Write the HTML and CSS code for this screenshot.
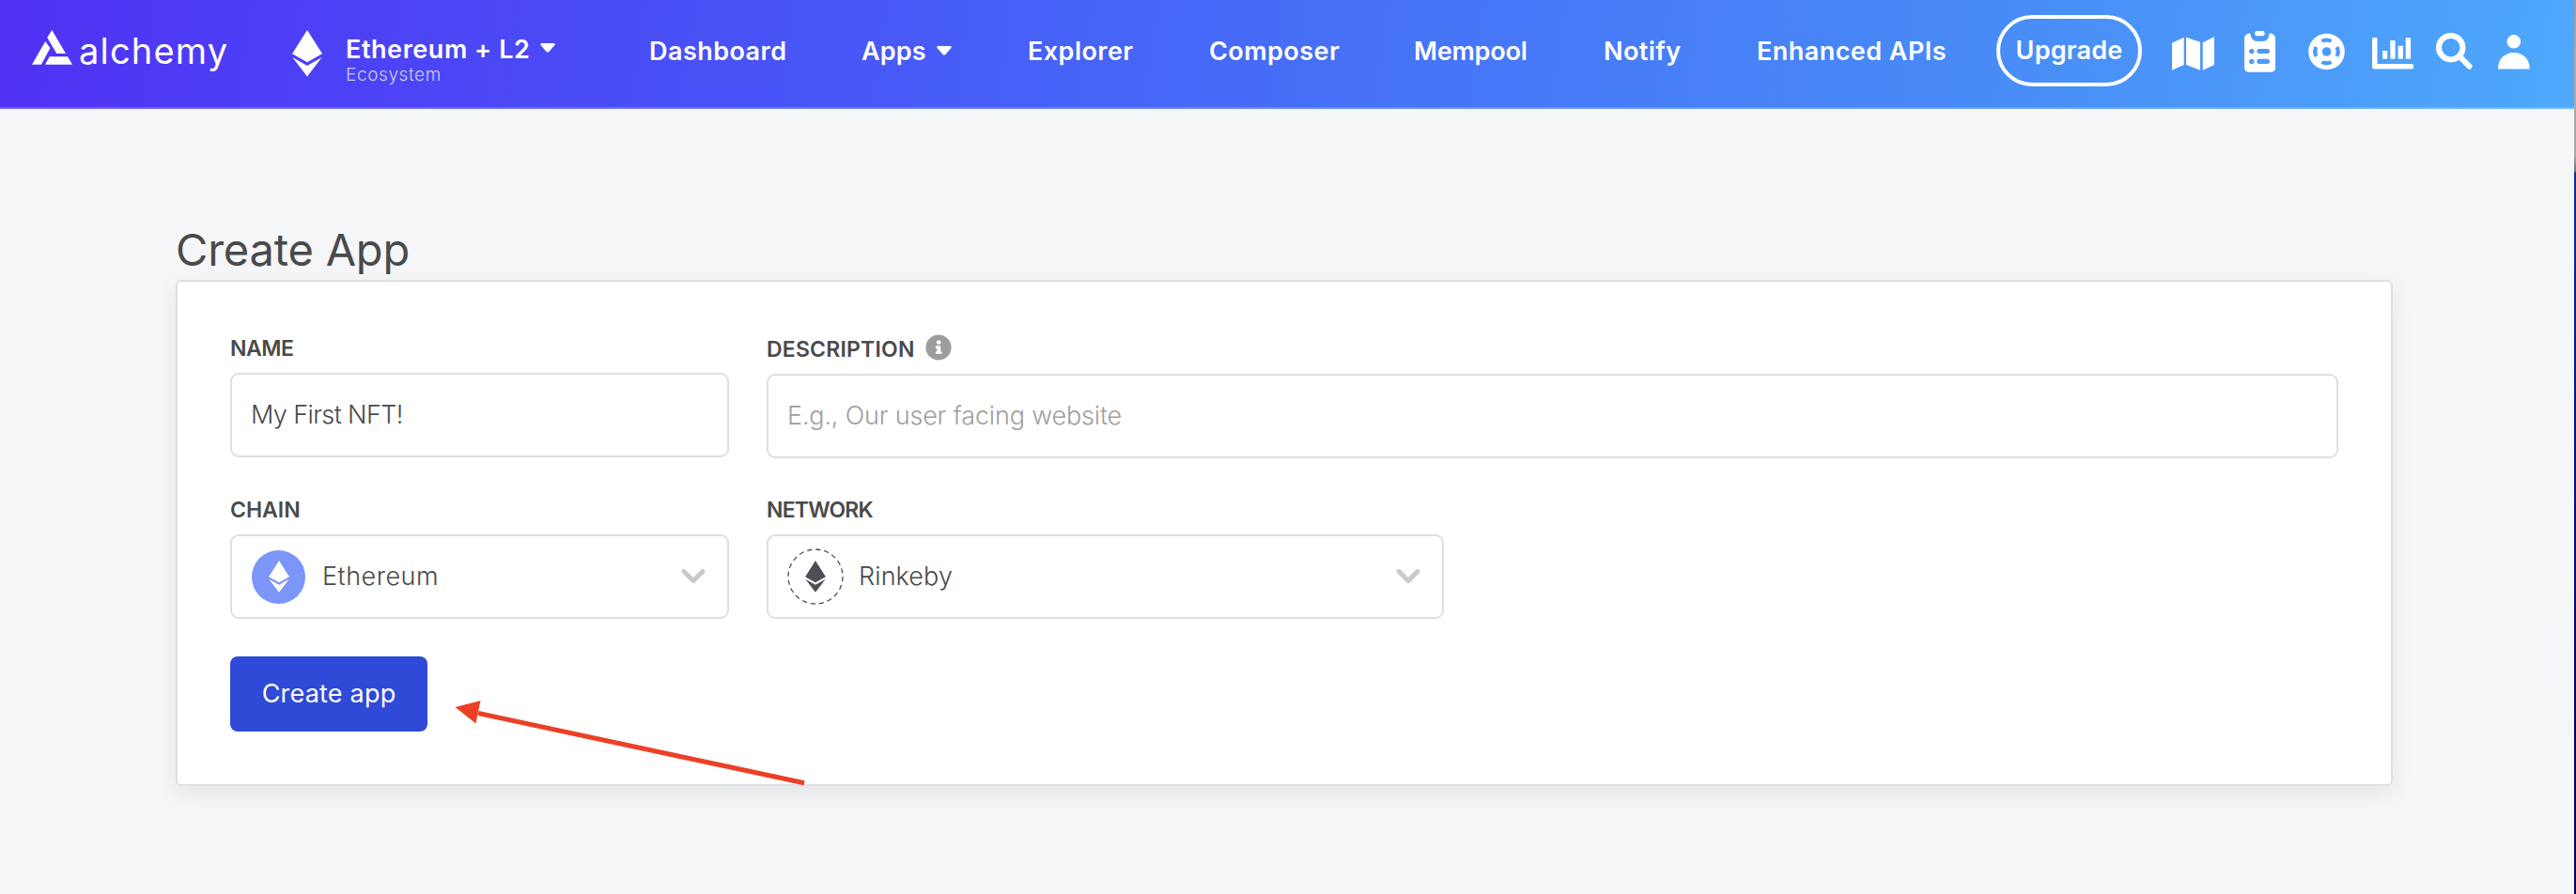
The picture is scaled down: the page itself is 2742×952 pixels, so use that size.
FILE: index.html
```html
<!DOCTYPE html>
<html lang="en">
<head>
<meta charset="utf-8">
<title>Create App</title>
<link rel="stylesheet" href="styles.css">
</head>
<body>
<svg class="defs" aria-hidden="true">
  <symbol id="eth" viewBox="0 0 32 50">
    <path d="M16 0 32 25.2 16 34.2 0 25.2Z M.3 29 16 38 31.7 29 16 49.5Z"/>
  </symbol>
  <symbol id="caret" viewBox="0 0 16 10">
    <path d="M1.8 0H14.2Q16.6.2 15.3 2.2L9.4 9Q8 10.4 6.6 9L.7 2.2Q-.6.2 1.8 0Z"/>
  </symbol>
  <symbol id="chevron" viewBox="0 0 26 18">
    <path d="M3 3.5 13 13.5 23 3.5" fill="none" stroke="#cacaca" stroke-width="5" stroke-linecap="round" stroke-linejoin="round"/>
  </symbol>
</svg>

<header class="topbar">
  <a class="logo">
    <svg class="logo-mark" viewBox="0 0 44 40"><path d="M21.3 2 36 27H26.2L16.3 10Z M14.3 14 19.4 21.3 10 38.7H0Z M18.7 30.3H38L43 38.7H14Z"/></svg>
    <span class="logo-word">alchemy</span>
  </a>
  <svg class="eco-icon"><use href="#eth"/></svg>
  <div class="eco">
    <div class="eco-name"><span>Ethereum + L2</span><svg class="caret"><use href="#caret"/></svg></div>
    <div class="eco-sub">Ecosystem</div>
  </div>
  <nav class="nav">
    <a>Dashboard</a>
    <a class="apps">Apps<svg class="caret"><use href="#caret"/></svg></a>
    <a>Explorer</a>
    <a>Composer</a>
    <a class="mempool">Mempool</a>
    <a>Notify</a>
    <a>Enhanced APIs</a>
  </nav>
  <a class="upgrade">Upgrade</a>
  <div class="tools">
    <svg class="tool-map" viewBox="0 0 45 50"><path d="M0 15.7 12.7 9.7V39L0 44.7Z M15 9.7 30 14.7V44.7L15 39Z M32.7 15.3 45 9.3V39L32.7 44.7Z"/></svg>
    <svg class="tool-list" viewBox="0 0 33 50">
      <path d="M0 11Q0 6.5 5 5.5H6.3Q7 14 14 14H19Q26 14 26.7 5.5H28Q33 6.5 33 11V41.7Q33 46.7 28 46.7H5Q0 46.7 0 41.7Z"/>
      <rect x="11" y="3" width="10.7" height="5.3" rx="2.4"/>
      <g class="hole"><circle cx="7.8" cy="24.6" r="2.7"/><circle cx="7.8" cy="35.4" r="2.7"/><rect x="13.3" y="22" width="13.7" height="5.1" rx="2.5"/><rect x="13.3" y="32.8" width="13.7" height="5.1" rx="2.5"/></g>
    </svg>
    <svg class="tool-help" viewBox="0 0 39 50">
      <circle cx="19.5" cy="25" r="19.3"/>
      <circle class="hole" cx="19.5" cy="25" r="4.8"/>
      <path class="hole" d="M13.5 12.2Q19.5 9 25.5 12.2L23.6 15.6Q19.5 14 15.4 15.6Z M13.5 37.8Q19.5 41 25.5 37.8L23.6 34.4Q19.5 36 15.4 34.4Z M6.7 19Q3.5 25 6.7 31L10.1 29.1Q8.5 25 10.1 20.9Z M32.3 19Q35.5 25 32.3 31L28.9 29.1Q30.5 25 28.9 20.9Z"/>
    </svg>
    <svg class="tool-chart" viewBox="0 0 44 50">
      <path d="M1.5 10H4Q5.5 10 5.5 11.5V38H42.5Q44 38 44 39.5V42Q44 43.4 42.5 43.4H2Q0 43.4 0 41.4V11.5Q0 10 1.5 10Z"/>
      <rect x="11" y="24" width="5.3" height="8.7" rx=".8"/><rect x="19.3" y="13" width="5.3" height="19.7" rx=".8"/><rect x="27.6" y="18.7" width="5.3" height="14" rx=".8"/><rect x="35.7" y="10.3" width="5.3" height="22.4" rx=".8"/>
    </svg>
    <svg class="tool-search" viewBox="0 0 39 50"><circle cx="15.7" cy="20.7" r="12.7"/><path d="M25.5 30.5 35.5 40.7"/></svg>
    <svg class="tool-user" viewBox="0 0 34 50"><circle cx="16.8" cy="14.3" r="7.3"/><path d="M0 43.4C0 32.5 7.5 26 16.8 26S33.7 32.5 33.7 43.4Z"/></svg>
  </div>
</header>

<main class="page">
  <h1 class="title">Create App</h1>
  <form class="card">
    <div class="field">
      <label class="label name">Name</label>
      <div class="input value-name">My First NFT!</div>
    </div>
    <div class="field lowered">
      <label class="label description">Description
        <svg class="info" viewBox="0 0 28 28"><circle cx="14" cy="14" r="13.6" fill="#9d9d9d"/><circle cx="14.2" cy="8.6" r="2.4" fill="#fff"/><path d="M10.9 12.3H16.2V18.2H17.5V20.7H10.9V18.2H12.3V14.8H10.9Z" fill="#fff"/></svg>
      </label>
      <div class="input placeholder">E.g., Our user facing website</div>
    </div>
    <div class="field">
      <label class="label chain">Chain</label>
      <div class="input select">
        <span class="coin"><svg><use href="#eth"/></svg></span>
        <span class="value-chain">Ethereum</span>
        <svg class="chevron"><use href="#chevron"/></svg>
      </div>
    </div>
    <div class="field network-field">
      <label class="label network">Network</label>
      <div class="input select">
        <svg class="testnet" viewBox="0 0 60 60"><circle cx="30" cy="30" r="29" fill="none" stroke="#4e4f55" stroke-width="1.3" stroke-dasharray="5.2 3.91"/><use href="#eth" x="19" y="13" width="22" height="34"/></svg>
        <span class="value-network">Rinkeby</span>
        <svg class="chevron"><use href="#chevron"/></svg>
      </div>
    </div>
    <button class="submit" type="button">Create app</button>
  </form>
</main>

<svg class="arrow" viewBox="0 0 376 96"><path d="M26 17.5 373 91.8" stroke="#eb4025" stroke-width="5" fill="none"/><path d="M1.5 11 28.5 4 23.5 28.5Z" fill="#eb4025"/></svg>
<div class="edge"></div>
</body>
</html>
```

FILE: styles.css
```css
* { box-sizing: border-box; }
body {
  margin: 0;
  width: 2742px;
  height: 952px;
  overflow: hidden;
  position: relative;
  background: #f4f6f8;
  color: #4a4a4a;
  font-family: Inter, Roboto, sans-serif;
}
svg { display: block; flex: none; }
.defs { position: absolute; width: 0; height: 0; }

.topbar {
  display: grid;
  grid-template-columns: 277px 57px 323px 1434px 187px 1fr;
  align-items: start;
  height: 116px;
  padding-left: 34px;
  border-bottom: 2px solid rgba(255, 255, 255, .2);
  background: linear-gradient(98deg, #5032f4 0%, #4757f7 33%, #4674f7 55%, #488af7 76%, #4ea9fb 100%) border-box;
  color: #fff;
  fill: #fff;
  white-space: nowrap;
}
.logo { display: flex; padding-top: 30px; }
.logo-mark { width: 44px; height: 40px; }
.logo-word { margin: -3px 0 0 6px; font-size: 38px; line-height: 54px; letter-spacing: 1.2px; }
.eco-icon { width: 32px; height: 50px; margin-top: 32px; }
.eco { padding-top: 34px; }
.eco-name { display: flex; font-size: 27px; font-weight: 600; line-height: 37px; letter-spacing: .55px; }
.eco-name .caret { margin: 12px 0 0 11px; }
.eco-sub { font-size: 19px; font-weight: 300; line-height: 18px; color: #ccccdf; letter-spacing: .6px; }
.caret { width: 16px; height: 10px; }
.nav {
  display: grid;
  grid-template-columns: 226px 177px 193px 218px 202px 163px 255px;
  font-size: 27px;
  font-weight: 600;
  line-height: 109px;
  letter-spacing: .45px;
}
.apps { display: flex; letter-spacing: .1px; }
.apps .caret { margin: 49px 0 0 11px; }
.mempool { letter-spacing: -.2px; }
.upgrade {
  width: 155px;
  height: 76px;
  margin-top: 16px;
  border: 4px solid #fff;
  border-radius: 38px;
  font-size: 27px;
  font-weight: 600;
  line-height: 67px;
  letter-spacing: .2px;
  text-align: center;
}
.tools { display: flex; padding-top: 30px; }
.tools svg { height: 50px; }
.hole { fill: #4d9bf9; }
.tool-map { width: 45px; margin-right: 32px; }
.tool-list { width: 33px; margin-right: 35px; }
.tool-help { width: 39px; margin-right: 29px; }
.tool-chart { width: 44px; margin-right: 24px; }
.tool-search { width: 39px; margin-right: 27px; fill: none; stroke: #fff; stroke-width: 6; stroke-linecap: round; }
.tool-user { width: 34px; }

.page { padding: 121px 195px 0 187px; }
.title { margin: 0 0 3px; font-size: 47px; font-weight: 400; line-height: 58px; letter-spacing: -.2px; }
.card {
  display: grid;
  grid-template-columns: 531px 1673px;
  column-gap: 40px;
  row-gap: 40px;
  height: 539px;
  padding: 56px;
  border: 2px solid #dfe0e0;
  border-radius: 6px;
  background: #fff;
  box-shadow: 0 8px 24px rgba(0, 0, 0, .07);
  align-content: start;
}
.lowered { margin-top: 1px; }
.network-field { width: 721px; }
.label {
  display: flex;
  height: 30px;
  margin-bottom: 11px;
  font-size: 23px;
  font-weight: 600;
  line-height: 30px;
  text-transform: uppercase;
}
.name { letter-spacing: -.5px; }
.description { letter-spacing: .2px; }
.network { letter-spacing: -.8px; }
.info { width: 28px; height: 28px; margin: -1px 0 0 11px; }
.input {
  height: 90px;
  padding-left: 20px;
  border: 2px solid #dfdfdf;
  border-radius: 9px;
  background: #fff;
  font-size: 27px;
  font-weight: 300;
  line-height: 86px;
}
.value-name { letter-spacing: -.6px; }
.placeholder { color: #9f9f9f; letter-spacing: -.18px; }
.select { display: flex; align-items: center; padding: 0 23px 0 21px; line-height: 84px; }
.coin {
  display: grid;
  place-items: center;
  width: 57px;
  height: 57px;
  border-radius: 50%;
  background: #7b95f9;
  fill: #fff;
}
.coin svg { width: 22px; height: 34px; }
.testnet { width: 60px; height: 60px; margin-left: -1px; fill: #4e4f55; }
.value-chain { margin-left: 18px; letter-spacing: .5px; }
.value-network { margin-left: 16px; letter-spacing: .1px; }
.chevron { width: 26px; height: 18px; margin-left: auto; }
.submit {
  width: 210px;
  height: 80px;
  padding: 0;
  border: 0;
  border-radius: 8px;
  background: #2f4ad7;
  color: #fff;
  font: 400 27px/80px Inter, Roboto, sans-serif;
  letter-spacing: .2px;
}

.arrow { position: absolute; left: 483px; top: 742px; width: 376px; height: 96px; }
.edge {
  position: absolute;
  top: 0;
  right: 0;
  width: 2px;
  height: 952px;
  background: linear-gradient(#8f9aa5 0, #a9a9a9 60px, #a9a9a9 165px, #6b6f73 183px, #0b2a9c 184px, #00109a 450px, #00006c 800px);
}
```
